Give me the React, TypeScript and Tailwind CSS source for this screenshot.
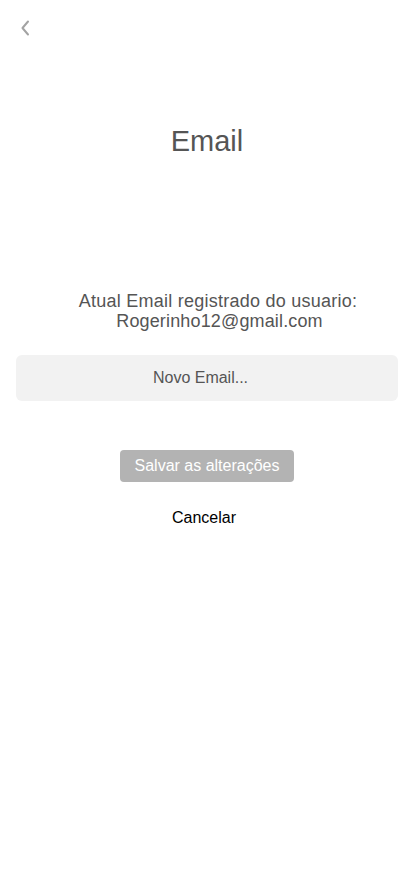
import React, { useState } from "react";

function BackIcon() {
  return (
    <svg width="12" height="18" viewBox="0 0 12 18" fill="none" className="block">
      <path d="M9 2.5 L3.5 9 L9 15.5" stroke="#a3a3a3" strokeWidth="2" strokeLinecap="round" strokeLinejoin="round" />
    </svg>
  );
}

export default function App() {
  const [email, setEmail] = useState("");

  return (
    <div className="w-[414px] min-h-[896px] bg-white font-['Liberation_Sans',Arial,sans-serif]">
      <div className="h-[60px] pl-[19px] pt-[19px]">
        <button className="block">
          <BackIcon />
        </button>
      </div>

      <h1 className="mt-[67px] text-center text-[29px] leading-[29px] text-[#555555]">Email</h1>

      <div className="mt-[135px] flex flex-col items-center text-[18px] leading-[20px] text-[#555555]">
        <p className="pl-[22px] tracking-[0.25px]">Atual Email registrado do usuario:</p>
        <p className="pl-[25px] tracking-[0.15px]">Rogerinho12@gmail.com</p>
      </div>

      <div className="mt-[24px] px-4">
        <input
          value={email}
          onChange={(e) => setEmail(e.target.value)}
          placeholder="Novo Email..."
          className="w-full h-[46px] rounded-md bg-[#f2f2f2] text-center pr-[13px] text-[16px] text-[#555555] placeholder:text-[#555555] outline-none"
        />
      </div>

      <div className="mt-[49px] flex flex-col items-center">
        <button className="w-[174px] h-[32px] rounded-[4px] bg-[#b3b3b3] text-white text-[16px]">
          Salvar as alterações
        </button>
        <button className="mt-[26px] pr-[6px] text-[16px] text-black leading-[20px]">Cancelar</button>
      </div>
    </div>
  );
}
